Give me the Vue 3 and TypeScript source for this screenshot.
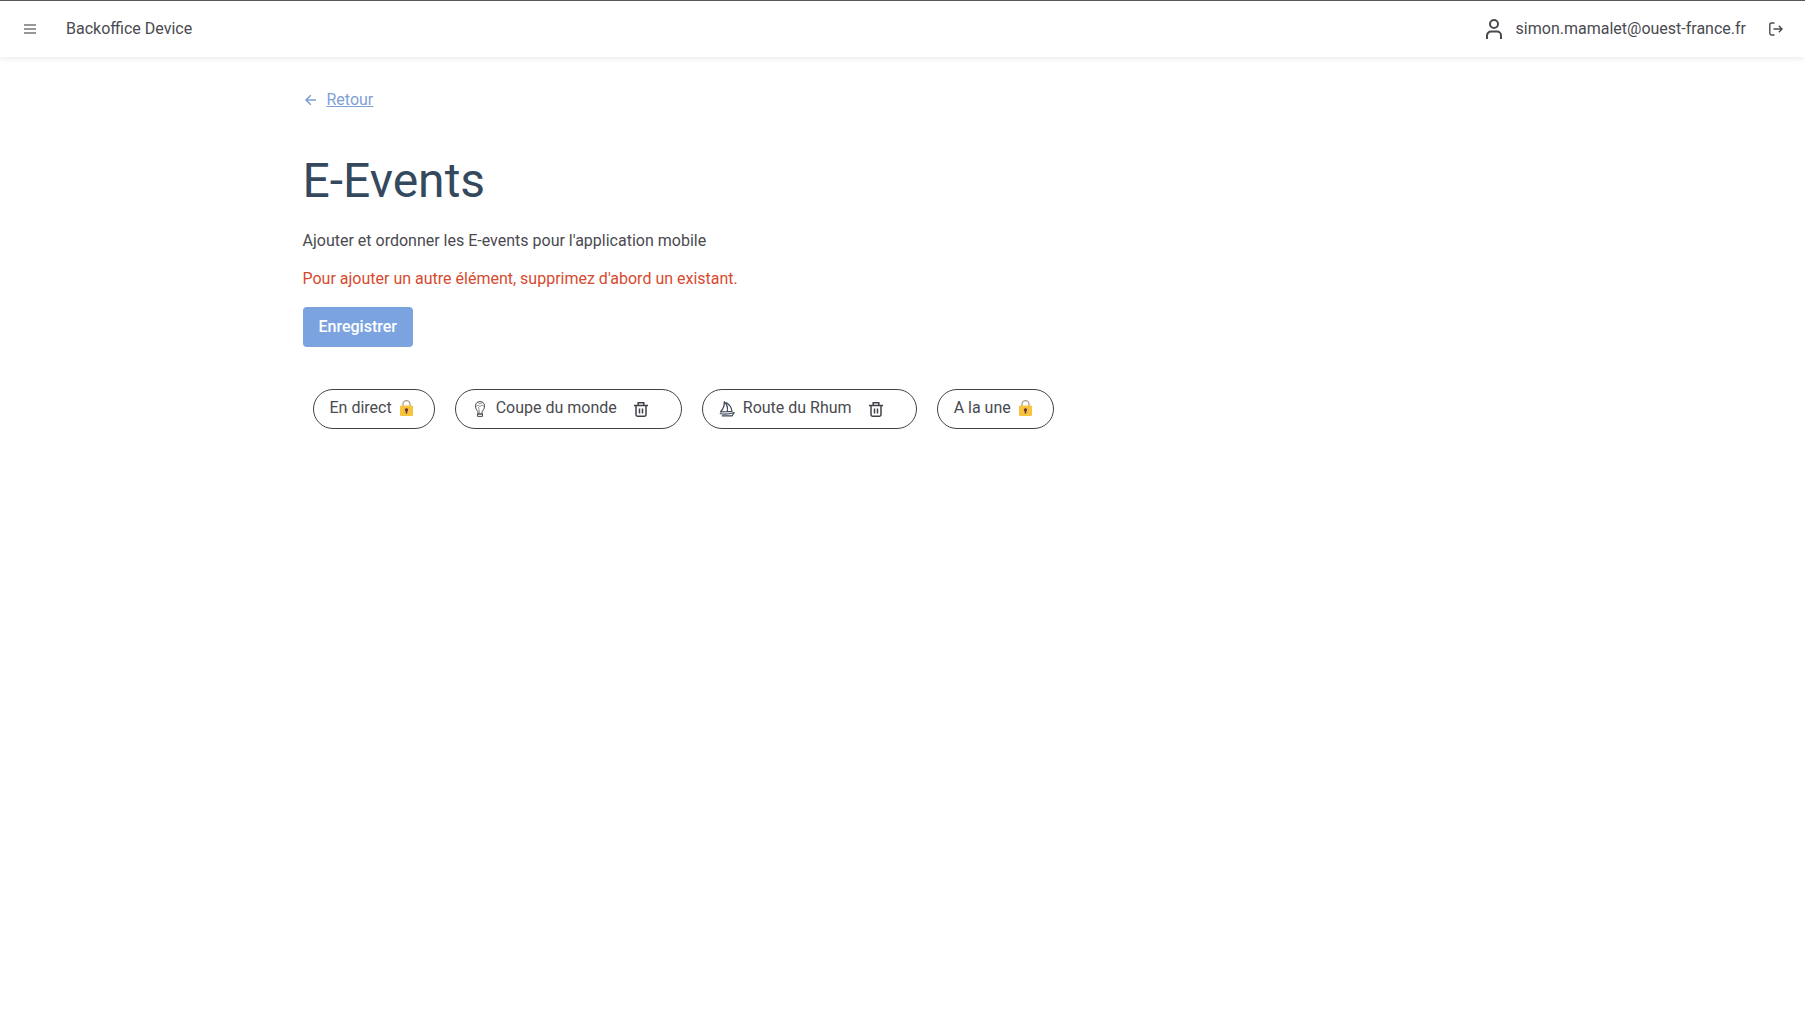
<script setup lang="ts">
interface EventItem {
  label: string
  icon?: 'trophy' | 'boat'
  locked: boolean
}

const events: EventItem[] = [
  { label: 'En direct', locked: true },
  { label: 'Coupe du monde', icon: 'trophy', locked: false },
  { label: 'Route du Rhum', icon: 'boat', locked: false },
  { label: 'A la une', locked: true },
]
</script>

<template>
  <div class="app">
    <header class="topbar">
      <button class="icon-button menu" type="button" aria-label="Menu">
        <svg width="12" height="10" viewBox="0 0 12 10" fill="none" stroke="currentColor" stroke-width="1.5">
          <path d="M0 1h12M0 5h12M0 9h12" />
        </svg>
      </button>
      <span class="brand">Backoffice Device</span>
      <div class="account">
        <svg width="16" height="20" viewBox="0 0 16 20" fill="none" stroke="currentColor" stroke-width="2">
          <circle cx="8" cy="5" r="4" />
          <path d="M1 20v-3.500a4 4 0 0 1 4-4h6a4 4 0 0 1 4 4V20" />
        </svg>
        <span>simon.mamalet@ouest-france.fr</span>
      </div>
      <button class="icon-button" type="button" aria-label="Se déconnecter">
        <svg width="14" height="14" viewBox="0 0 14 14" fill="none" stroke="currentColor" stroke-width="1.400">
          <path d="M5.500 1H2.500Q.8 1 .8 2.700V11.300Q.8 13 2.500 13H5.500M4.500 7H13M9.800 3.800 13 7 9.800 10.200" />
        </svg>
      </button>
    </header>

    <main class="page">
      <a class="back" href="#">
        <svg width="16" height="12" viewBox="0 0 16 12" fill="none" stroke="currentColor" stroke-width="1.500">
          <path d="M13 6H3.500M7.800 1.200 3 6l4.800 4.800" />
        </svg>
        <span class="back-label">Retour</span>
      </a>
      <h1>E-Events</h1>
      <p>Ajouter et ordonner les E-events pour l'application mobile</p>
      <p class="warning">Pour ajouter un autre élément, supprimez d'abord un existant.</p>
      <button class="save" type="button">Enregistrer</button>

      <ul class="events">
        <li v-for="event in events" :key="event.label" class="event">
          <svg v-if="event.icon === 'trophy'" class="trophy" width="10" height="16" viewBox="0 0 10 16" fill="none" stroke="currentColor" stroke-width="1">
            <path d="M2.800 10.500C.8 8 .5 6.500.5 4.800.5 2.200 2.400.6 5 .6s4.500 1.600 4.500 4.200c0 1.700-.3 3.200-2.300 5.700L7 13H3zM2.500 13h5v2.400h-5z" />
            <path d="M1 5.500 3 4l2 1.500L7 4l2 1.500M3 1.500 5 3l2.200-1.500M3.500 6c.3 2 .8 3 .8 6" stroke-width=".6" />
          </svg>
          <svg v-else-if="event.icon === 'boat'" class="boat" width="16" height="16" viewBox="0 0 16 16" fill="none" stroke="currentColor" stroke-width="1.200" stroke-linejoin="round">
            <path d="M5.200.8C8 3 8.800 7 8.300 10.600L1.500 10.800C4.300 8 5.600 4.400 5.200.8zM7 1.500c3.500 2 5.600 5 6 8.900l-4.500.3" />
            <path d="M.8 12.500C5 13.500 11 12.800 15.200 11.500L13 14.800H2.800" />
          </svg>
          <span class="label">{{ event.label }}</span>
          <svg v-if="event.locked" class="lock" width="13" height="16" viewBox="0 0 13 16" role="img" aria-label="Verrouillé">
            <path d="M3 7V4.200a3.500 3.500 0 0 1 7 0V7" fill="none" stroke="#a89c8c" stroke-width="1.300" />
            <rect y="5.500" width="13" height="10.500" rx="1.200" fill="#f8c33c" />
            <path d="M6.500 8.300a1.700 1.700 0 0 1 .8 3.200V13.500H5.700V11.500a1.700 1.700 0 0 1 .8-3.200z" fill="#6b3440" />
          </svg>
          <button v-else class="icon-button remove" type="button" :aria-label="`Supprimer ${event.label}`">
            <svg width="14" height="15" viewBox="0 0 14 15" fill="none" stroke="currentColor" stroke-width="1.500">
              <path d="M0 3.500h14M4.200 3.500V.8h5.600v2.700M2 3.500v9.300q0 1.400 1.400 1.400h7.200q1.400 0 1.400-1.400V3.500M5.500 6.500v5M8.500 6.500v5" />
            </svg>
          </button>
        </li>
      </ul>
    </main>
  </div>
</template>

<style>
body {
  margin: 0;
  background: #fff;
}
</style>

<style scoped>
.app {
  font: 16px/24px Roboto, 'Liberation Sans', sans-serif;
  color: #4a4a50;
}

svg {
  display: block;
  flex: none;
}

.topbar {
  display: flex;
  align-items: center;
  height: 56px;
  padding: 0 22px 0 24px;
  border-top: 1px solid #59565a;
  background: #fff;
  box-shadow: 0 2px 6px rgba(0, 0, 0, 0.08);
}

.icon-button {
  padding: 0;
  border: 0;
  background: none;
  color: inherit;
  cursor: pointer;
}

.menu {
  margin-right: 30px;
  color: #77777b;
}

.account {
  display: flex;
  align-items: center;
  gap: 14px;
  margin: 0 23px 0 auto;
}

.page {
  max-width: 1200px;
  margin: 0 auto;
  padding: 31px 24px;
}

.back {
  display: inline-flex;
  align-items: center;
  gap: 8px;
  color: #7f9fd6;
  text-decoration: none;
}

.back-label {
  text-decoration: underline;
}

h1 {
  margin: 40px 0 20px;
  font-size: 48px;
  line-height: 56px;
  font-weight: 400;
  color: #34495e;
}

p {
  margin: 0 0 14px;
}

.warning {
  margin-bottom: 16px;
  color: #d64a2f;
}

.save {
  display: block;
  height: 40px;
  padding: 0 16px;
  border: 0;
  border-radius: 4px;
  background: #7ba3df;
  color: #fff;
  font: 500 16px/24px Roboto, 'Liberation Sans', sans-serif;
  cursor: pointer;
}

.events {
  display: flex;
  flex-wrap: wrap;
  gap: 20px;
  margin: 42px 10px 0;
  padding: 0;
  list-style: none;
}

.event {
  display: flex;
  align-items: center;
  gap: 8px;
  height: 38px;
  padding: 0 16px;
  border: 1px solid #424246;
  border-radius: 20px;
  background: #fff;
}

.label {
  padding-bottom: 2px;
}

.trophy {
  margin: 0 3px;
}

.boat {
  color: #3c4858;
}

.lock {
  margin: 0 5px 2px 0;
}

.remove {
  margin: 0 17px 0 9px;
  color: #3f4248;
}
</style>
